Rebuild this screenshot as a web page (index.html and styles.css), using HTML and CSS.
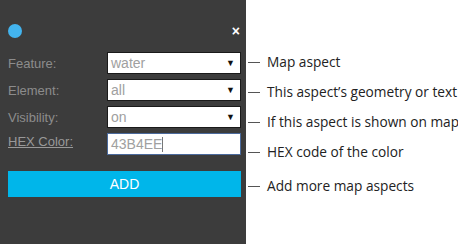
FILE: index.html
```html
<!DOCTYPE html>
<html>
<head>
<meta charset="utf-8">
<link rel="stylesheet" href="styles.css">
</head>
<body>
<div class="page">
  <div class="panel">
    <div class="head">
      <span class="dot"></span>
      <span class="close">×</span>
    </div>
    <div class="rows">
      <div class="row"><span class="label">Feature:</span><div class="select"><span>water</span><span class="arrow">▼</span></div></div>
      <div class="row"><span class="label">Element:</span><div class="select"><span>all</span><span class="arrow">▼</span></div></div>
      <div class="row"><span class="label">Visibility:</span><div class="select"><span>on</span><span class="arrow">▼</span></div></div>
      <div class="row"><span class="label link">HEX Color:</span><div class="select hex"><span>43B4EE</span><span class="caret"></span></div></div>
    </div>
    <div class="add">ADD</div>
  </div>
  <div class="notes">
    <div class="note"><span class="tick"></span>Map aspect</div>
    <div class="note"><span class="tick"></span>This aspect’s geometry or text</div>
    <div class="note"><span class="tick"></span>If this aspect is shown on map</div>
    <div class="note"><span class="tick"></span>HEX code of the color</div>
    <div class="note last"><span class="tick"></span>Add more map aspects</div>
  </div>
</div>
</body>
</html>
```
FILE: styles.css
```css
html, body { margin: 0; padding: 0; background: #fff; }
.page { display: flex; width: 458px; height: 244px; overflow: hidden; }
.panel {
  width: 246px; height: 244px; background: #3c3c3c; flex: none;
  box-sizing: border-box; padding: 24px 5px 0 8px;
  font-family: "Liberation Sans", Arial, sans-serif;
}
.head { display: flex; justify-content: space-between; align-items: center; height: 14px; }
.dot { width: 14px; height: 14px; border-radius: 50%; background: #43b4ee; }
.close { color: #fff; font-weight: bold; font-size: 14px; line-height: 14px; margin-right: 1px; }
.rows { display: flex; flex-direction: column; gap: 5px; margin-top: 14px; }
.row { display: flex; align-items: center; height: 22px; }
.label { width: 99px; color: #8c8c8c; font-size: 13px; }
.label.link { text-decoration: underline; color: #999; align-self: flex-start; margin-top: 1px; }
.select {
  flex: 1; height: 22px; box-sizing: border-box; background: #fff;
  border: 1px solid #1a1a1a; display: flex; align-items: center;
  justify-content: space-between; padding: 0 5px 0 3px;
  color: #a0a0a0; font-size: 14px;
}
.arrow { color: #111; font-size: 9px; }
.hex { border: 1px solid #4b6a9c; justify-content: flex-start; }
.caret { width: 1px; height: 15px; background: #777; }
.add {
  margin-top: 16px; height: 26px; background: #00b6ea; color: #fff;
  display: flex; align-items: center; justify-content: center; font-size: 14px;
}
.notes {
  flex: 1; padding-top: 46px; display: flex; flex-direction: column;
  font-family: "Open Sans", "Noto Sans", sans-serif; font-size: 13.7px; color: #222;
}
.note { height: 30px; display: flex; align-items: center; white-space: nowrap; }
.note.last { margin-top: 4px; }
.tick { width: 12px; height: 1px; background: #555; margin: 2px 7px 0 2px; flex: none; }
```
